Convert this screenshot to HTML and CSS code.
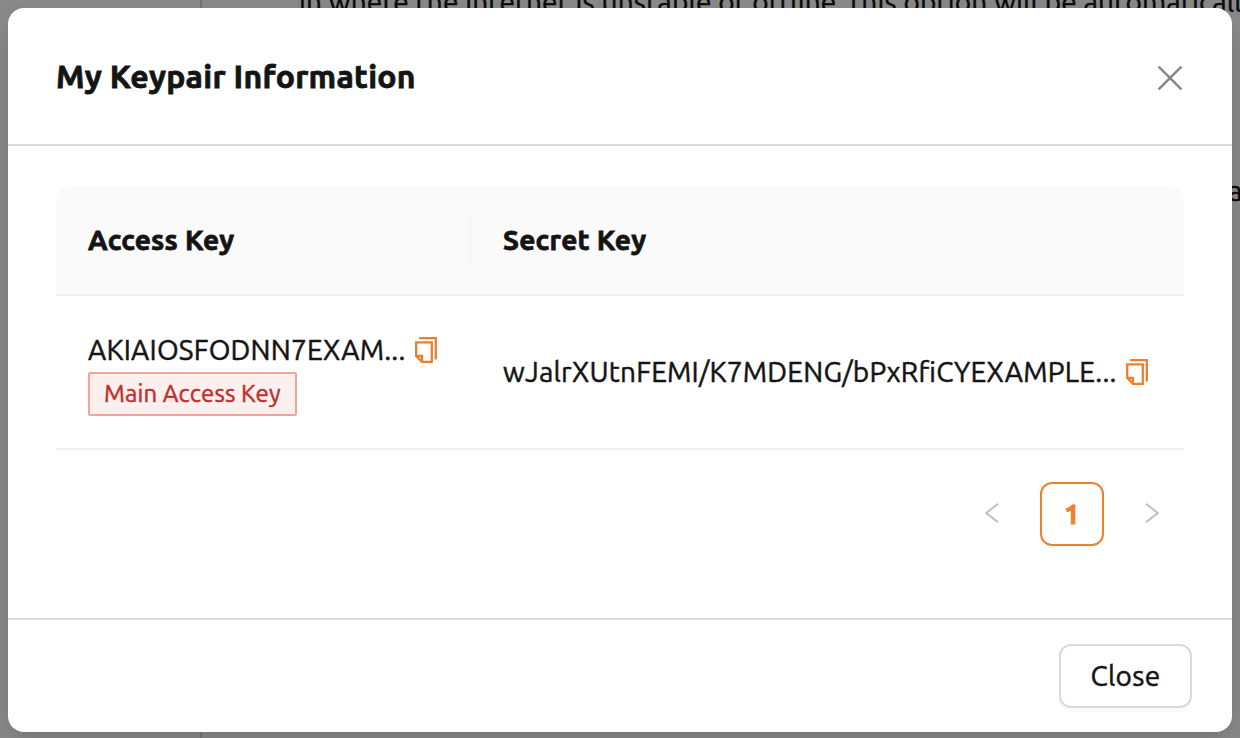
FILE: index.html
```html
<!DOCTYPE html>
<html lang="en">
<head>
<meta charset="utf-8">
<title>My Keypair Information</title>
<link rel="stylesheet" href="styles.css">
</head>
<body>
<div class="page">
  <div class="page-divider"></div>
  <div class="page-text page-text-main">in where the internet is unstable or offline, this option will be automatically</div>
  <div class="page-text page-text-side">a</div>
</div>
<div class="mask">
  <section class="modal" role="dialog">
    <header class="modal-header">
      <h1 class="modal-title">My Keypair Information</h1>
      <svg class="close-icon" width="26" height="26" viewBox="0 0 26 26"><path d="M1.6 1.6 24.4 24.4M24.4 1.6 1.6 24.4"/></svg>
    </header>
    <main class="modal-body">
      <div class="table">
        <div class="row head">
          <div class="cell head-first">Access Key</div>
          <div class="cell">Secret Key</div>
        </div>
        <div class="row data">
          <div class="cell">
            <div class="key"><span>AKIAIOSFODNN7EXAM...</span>
              <svg class="copy-icon" width="22" height="26" viewBox="0 0 22 26"><path d="M4.2 1.2H20.8V22.5M1.2 5.4H16.8V24.8H7L1.2 19ZM1.2 19H7V24.8"/></svg>
            </div>
            <div class="tag">Main Access Key</div>
          </div>
          <div class="cell">
            <div class="key"><span>wJalrXUtnFEMI/K7MDENG/bPxRfiCYEXAMPLE...</span>
              <svg class="copy-icon" width="22" height="26" viewBox="0 0 22 26"><path d="M4.2 1.2H20.8V22.5M1.2 5.4H16.8V24.8H7L1.2 19ZM1.2 19H7V24.8"/></svg>
            </div>
          </div>
        </div>
      </div>
      <nav class="pagination">
        <span class="arrow"><svg width="14" height="20" viewBox="0 0 14 20"><path d="M13 .8 1.2 10 13 19.2"/></svg></span>
        <span class="page-number">1</span>
        <span class="arrow"><svg width="14" height="20" viewBox="0 0 14 20"><path d="M1 .8 12.8 10 1 19.2"/></svg></span>
      </nav>
    </main>
    <footer class="modal-footer"><button class="close-button">Close</button></footer>
  </section>
</div>
</body>
</html>
```
FILE: styles.css
```css
* { box-sizing: border-box; }
body {
  margin: 0;
  width: 1240px;
  height: 738px;
  overflow: hidden;
  position: relative;
  background: #fff;
  color: #141414;
  font: 28px/44px Ubuntu, "Noto Sans", sans-serif;
  font-feature-settings: "liga" 1;
  letter-spacing: .22px;
  -webkit-text-stroke: .5px currentColor;
}
.page { position: absolute; inset: 0; overflow: hidden; }
.page-divider { position: absolute; left: 200px; top: 0; width: 2px; height: 738px; background: #d9d9d9; }
.page-text { position: absolute; white-space: nowrap; }
.page-text-main { left: 299px; top: -20px; letter-spacing: .19px; }
.page-text-side { left: 1228px; top: 169px; }
.mask { position: relative; height: 738px; padding: 8px 8px 6px; background: rgba(0, 0, 0, .45); }
.modal {
  height: 724px;
  display: flex;
  flex-direction: column;
  background: #fff;
  border-radius: 16px;
  box-shadow: 0 12px 32px rgba(0, 0, 0, .08), 0 6px 12px -8px rgba(0, 0, 0, .12), 0 18px 56px 16px rgba(0, 0, 0, .05);
}
.modal-header {
  height: 138px;
  padding: 0 48px;
  display: flex;
  align-items: center;
  justify-content: space-between;
  border-bottom: 2px solid #d9d9d9;
}
.modal-title {
  margin: 0;
  font-size: 32px;
  font-weight: 700;
  letter-spacing: .25px;
  white-space: nowrap;
  -webkit-text-stroke-width: .8px;
}
.close-icon { margin-right: 1px; margin-top: 4px; fill: none; stroke: #898989; stroke-width: 2.6; }
.modal-body { flex: 1; padding: 40px 48px 0; }
.row { display: grid; grid-template-columns: 415px 1fr; align-items: center; border-bottom: 2px solid #f0f0f0; }
.head {
  height: 110px;
  background: #fafafa;
  border-radius: 16px 16px 0 0;
  font-weight: 700;
  letter-spacing: .27px;
  -webkit-text-stroke-width: .8px;
}
.data { height: 154px; }
.cell { padding-left: 32px; white-space: nowrap; }
.head-first { height: 46px; border-right: 1px solid #f0f0f0; line-height: 46px; }
.key { display: flex; align-items: center; gap: 9px; }
.copy-icon { fill: none; stroke: #ec7f2f; stroke-width: 2.3; }
.tag {
  width: 209px;
  height: 44px;
  padding-left: 14px;
  border: 2px solid #f2a39c;
  border-radius: 2px;
  background: #fcf0ef;
  color: #bf2f2f;
  font-size: 24px;
  line-height: 40px;
  letter-spacing: .13px;
}
.pagination { display: flex; align-items: center; justify-content: flex-end; gap: 16px; padding-top: 32px; }
.arrow { width: 64px; height: 64px; padding-bottom: 2px; display: flex; align-items: center; justify-content: center; }
.arrow svg { fill: none; stroke: #bfbfbf; stroke-width: 2; }
.page-number {
  width: 64px;
  height: 64px;
  border: 2px solid #ed8130;
  border-radius: 12px;
  color: #ed8130;
  font-weight: 700;
  line-height: 60px;
  text-align: center;
  -webkit-text-stroke-width: .8px;
}
.modal-footer { height: 114px; padding: 24px 40px; display: flex; justify-content: flex-end; border-top: 2px solid #d9d9d9; }
.close-button {
  width: 133px;
  height: 64px;
  padding: 0;
  border: 2px solid #d9d9d9;
  border-radius: 12px;
  background: #fff;
  box-shadow: 0 4px 0 rgba(0, 0, 0, .02);
  color: inherit;
  font: inherit;
  letter-spacing: .3px;
}
```
